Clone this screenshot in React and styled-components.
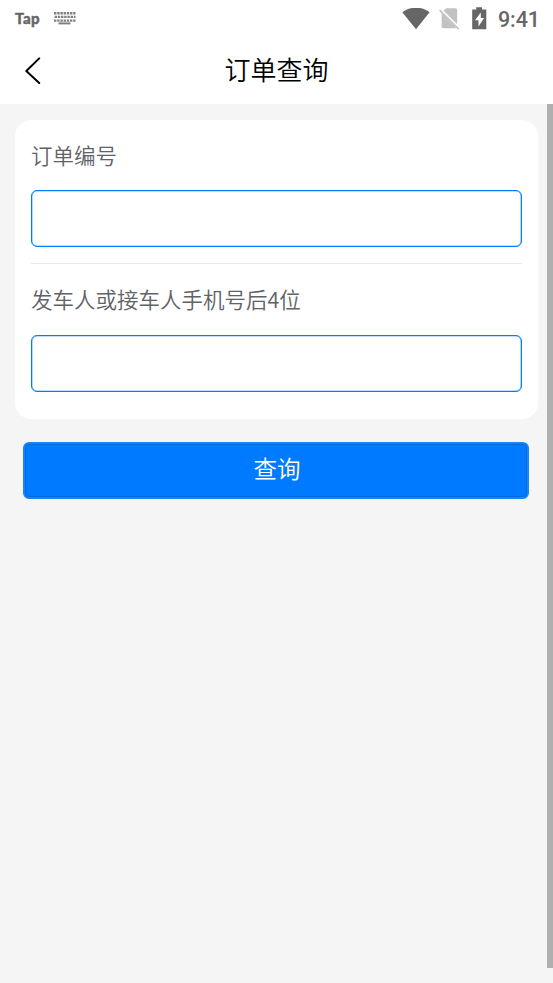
import React, {Fragment, useState} from 'react'
import styled, {createGlobalStyle} from 'styled-components'

const GlobalStyle = createGlobalStyle`
  * {
    box-sizing: border-box;
  }
  body {
    margin: 0;
    background: #f5f5f5;
    font-family: Roboto, "Noto Sans CJK SC", sans-serif;
  }
`

const Page = styled.div`
  display: flex;
  flex-direction: column;
  height: 983px;
  overflow: hidden;
  background: #f5f5f5;
`

const StatusBar = styled.div`
  display: flex;
  align-items: center;
  justify-content: space-between;
  height: 37px;
  padding: 0 15px;
  background: white;
  color: #666666;
`

const StatusGroup = styled.div`
  display: flex;
  align-items: center;
  gap: ${props => props.$gap};
`

const Carrier = styled.span`
  width: 26px;
  font-family: Lato, sans-serif;
  font-size: 15px;
  font-weight: 900;
  line-height: 20px;
  letter-spacing: 0.5px;
  padding-bottom: 2px;
  -webkit-text-stroke: 0.4px #666666;
`

const Clock = styled.span`
  width: 41px;
  font-size: 21.5px;
  font-weight: 500;
  line-height: 35px;
  padding-top: 2px;
  margin-left: -1px;
  margin-right: -1px;
  letter-spacing: -0.1px;
`

const Header = styled.header`
  display: grid;
  grid-template-columns: 64px 1fr 64px;
  align-items: center;
  height: 67px;
  padding-bottom: 1px;
  background: white;
`

const BackButton = styled.button`
  display: flex;
  width: 64px;
  padding: 0 0 0 22.5px;
  border: none;
  background: none;
`

const Title = styled.h1`
  margin: 0;
  padding-bottom: 3px;
  text-align: center;
  font-family: "Noto Sans CJK SC", sans-serif;
  font-size: 26px;
  font-weight: 350;
  line-height: 38px;
  color: black;
`

const Body = styled.div`
  display: flex;
  height: 864px;
`

const Content = styled.main`
  flex: 1;
  padding: 16px 9px 0 15px;
`

const ScrollThumb = styled.div`
  width: 6px;
  background: #afafaf;
`

const Card = styled.section`
  height: 299px;
  padding: 0 16px;
  border-radius: 16px;
  background: white;
`

const Field = styled.label`
  display: block;
  height: ${props => props.$divided ? '144px' : '155px'};
  padding-top: 20px;
  border-bottom: ${props => props.$divided ? '1px solid #ebebeb' : 'none'};
`

const FieldName = styled.span`
  display: block;
  height: ${props => props.$tall ? '51px' : '50px'};
  font-family: "Noto Sans CJK SC", sans-serif;
  font-size: 21.5px;
  font-weight: 350;
  line-height: 29px;
  color: #606266;
  white-space: nowrap;
`

const Input = styled.input`
  display: block;
  width: 491px;
  height: ${props => props.$height || '57px'};
  padding: 0 14px;
  border: 1px solid #007aff;
  border-radius: 6px;
  outline: none;
  background: white;
  box-shadow: inset 0 0 0 0.3px #007aff;
  font-size: 21px;
`

const SearchButton = styled.button`
  display: block;
  width: 506px;
  height: 57px;
  margin: 23px 0 0 8.4px;
  padding: 0 0 5px 1px;
  border: 2px solid #1485fc;
  border-radius: 6px;
  background: #007aff;
  box-shadow: inset 0 0 0 1px #006adc;
  font-family: "Noto Sans CJK SC", sans-serif;
  font-size: 23.5px;
  font-weight: 350;
  color: white;
`

function KeyboardIcon(){
    const rows = [0, 3.7, 7.4]
    return(
        <svg width="22" height="13" viewBox="0 0 22 13" fill="none" stroke="#808080">
            {rows.map((y, i) => (
                <path key={y} d={`M${i === 1 ? 0.6 : 0} ${y + 1.2}H21.5`} strokeWidth="2.4" strokeDasharray="2.4 0.8" />
            ))}
            <path d="M4.5 11.4H16.5" strokeWidth="2" />
        </svg>
    )
}

function WifiIcon(){
    return(
        <svg width="28" height="22" viewBox="0 0 28 22" fill="#666666">
            <path d="M0.3 4.2C8.2-1.8 19.8-1.8 27.6 4.2L14 21.2Z" />
        </svg>
    )
}

function NoSimIcon(){
    return(
        <svg width="21" height="22" viewBox="0 0 21 22">
            <path d="M4.4 2.7L7.2 0.3H16.4Q18.2 0.3 18.2 2.1V16.5Z" fill="#c2c2c2" />
            <path d="M2.6 4.9L17.5 20.2H4.4Q2.6 20.2 2.6 18.4Z" fill="#c2c2c2" />
            <path d="M1.7 1.2L20.5 20" stroke="white" strokeWidth="1.6" />
            <path d="M0.6 2.1L19.6 21.1" stroke="#c2c2c2" strokeWidth="1.6" />
        </svg>
    )
}

function BatteryIcon(){
    return(
        <svg width="15" height="23" viewBox="0 0 15 23">
            <path d="M4.2 0.2H10V2.4H14.3V22.2H0.2V2.4H4.2Z" fill="#666666" />
            <path d="M8.8 5.4L3 13.2H6.5V19.6L12 11H8.8Z" fill="white" />
        </svg>
    )
}

function BackIcon(){
    return(
        <svg width="20" height="28" viewBox="0 0 20 28" fill="none">
            <path d="M16.2 2.4L3.3 15L16.2 27" stroke="black" strokeWidth="2" strokeLinecap="round" strokeLinejoin="round" />
        </svg>
    )
}

function App(){

    const [orderNo, setOrderNo] = useState('')
    const [phoneTail, setPhoneTail] = useState('')

    return(
        <Fragment>
            <GlobalStyle />
            <Page>
                <StatusBar>
                    <StatusGroup $gap="13px">
                        <Carrier>Tap</Carrier>
                        <KeyboardIcon />
                    </StatusGroup>
                    <StatusGroup $gap="12px">
                        <StatusGroup $gap="9px">
                            <WifiIcon />
                            <NoSimIcon />
                        </StatusGroup>
                        <BatteryIcon />
                        <Clock>9:41</Clock>
                    </StatusGroup>
                </StatusBar>

                <Header>
                    <BackButton>
                        <BackIcon />
                    </BackButton>
                    <Title>订单查询</Title>
                </Header>

                <Body>
                    <Content>
                        <Card>
                            <Field $divided>
                                <FieldName>订单编号</FieldName>
                                <Input
                                    value={orderNo}
                                    onChange={(e)=>setOrderNo(e.target.value)}
                                />
                            </Field>
                            <Field>
                                <FieldName $tall>发车人或接车人手机号后4位</FieldName>
                                <Input
                                    $height="56.5px"
                                    maxLength={4}
                                    value={phoneTail}
                                    onChange={(e)=>setPhoneTail(e.target.value)}
                                />
                            </Field>
                        </Card>
                        <SearchButton>查询</SearchButton>
                    </Content>
                    <ScrollThumb />
                </Body>
            </Page>
        </Fragment>
    )
}
export default App;
